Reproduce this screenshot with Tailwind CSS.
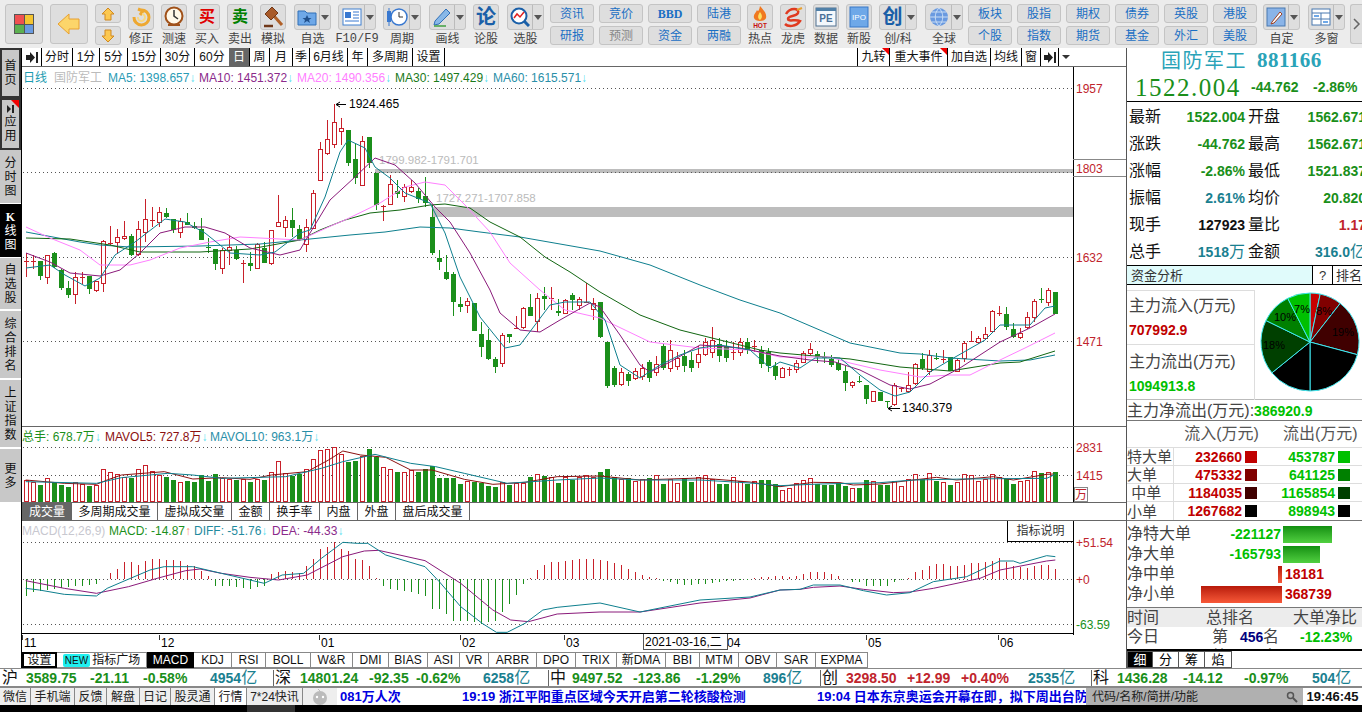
<!DOCTYPE html>
<html lang="zh">
<head>
  <meta charset="UTF-8">
  <title>国防军工 881166</title>
  <script src="https://cdn.jsdelivr.net/npm/@tailwindcss/browser@4"></script>
</head>
<body class="w-[1362px] h-[712px] overflow-hidden bg-white text-[12px] leading-none text-black font-['Liberation_Sans','Noto_Sans_CJK_SC',sans-serif]">

  <!-- toolbar -->
  <div class="flex h-[48px] bg-[#ececec] text-[#444] pt-[4px] pl-[5px]">
    <div class="w-[38px] h-[40px] rounded-[3px] border border-[#c4c4c4] bg-[#dedede] flex items-center justify-center">
      <svg width="22" height="22" viewBox="0 0 22 22"><rect x="1" y="1" width="20" height="20" fill="#555"/><rect x="2" y="2" width="9" height="9" fill="#f05050"/><rect x="12" y="2" width="8" height="9" fill="#f4c430"/><rect x="2" y="12" width="9" height="8" fill="#5cb050"/><rect x="12" y="12" width="8" height="8" fill="#6a9be0"/></svg>
    </div>
    <div class="w-[38px] h-[40px] ml-[7px] rounded-[3px] border border-[#c4c4c4] bg-[#dedede] flex items-center justify-center">
      <svg width="24" height="22" viewBox="0 0 24 22"><path d="M1 11 L12 1 V6 H22 V16 H12 V21 Z" fill="#fcd56a" stroke="#e8a030"/></svg>
    </div>
    <div class="w-[26px] ml-[7px] flex flex-col gap-[3px]">
      <div class="h-[19px] rounded-[3px] border border-[#c4c4c4] bg-[#dedede] flex items-center justify-center"><svg width="14" height="14" viewBox="0 0 14 14"><path d="M7 1 L13 7 H10 V13 H4 V7 H1 Z" fill="#fcc850" stroke="#d08820"/></svg></div>
      <div class="h-[19px] rounded-[3px] border border-[#c4c4c4] bg-[#dedede] flex items-center justify-center"><svg width="14" height="14" viewBox="0 0 14 14"><path d="M7 13 L13 7 H10 V1 H4 V7 H1 Z" fill="#fcc850" stroke="#d08820"/></svg></div>
    </div>

    <div class="w-[26px] ml-[7px] flex flex-col items-center gap-[3px]">
      <div class="w-[26px] h-[26px] rounded-[3px] border border-[#c4c4c4] bg-[#dedede] flex items-center justify-center"><svg width="20" height="20" viewBox="0 0 20 20"><path d="M10 3 A7.5 7.5 0 1 1 3 10 M7 2 L12 4 L9 8" fill="none" stroke="#eea830" stroke-width="3"/><path d="M7 10 A3.5 3.5 0 1 0 11 7" fill="none" stroke="#f8d880" stroke-width="2"/></svg></div>
      <span>修正</span>
    </div>
    <div class="w-[26px] ml-[7px] flex flex-col items-center gap-[3px]">
      <div class="w-[26px] h-[26px] rounded-[3px] border border-[#c4c4c4] bg-[#dedede] flex items-center justify-center"><svg width="20" height="22" viewBox="0 0 20 22"><circle cx="10" cy="10" r="8.5" fill="#fff8e8" stroke="#a05018" stroke-width="2"/><path d="M10 4 V10 L14 13" fill="none" stroke="#333" stroke-width="1.5"/><path d="M4 19 H16" stroke="#a05018" stroke-width="2"/></svg></div>
      <span>测速</span>
    </div>
    <div class="w-[26px] ml-[7px] flex flex-col items-center gap-[3px]">
      <div class="w-[26px] h-[26px] rounded-[3px] border border-[#c4c4c4] bg-[#dedede] flex items-center justify-center text-[#e00000] font-bold text-[16px]">买</div>
      <span>买入</span>
    </div>
    <div class="w-[26px] ml-[7px] flex flex-col items-center gap-[3px]">
      <div class="w-[26px] h-[26px] rounded-[3px] border border-[#c4c4c4] bg-[#dedede] flex items-center justify-center text-[#008000] font-bold text-[16px]">卖</div>
      <span>卖出</span>
    </div>
    <div class="w-[26px] ml-[7px] flex flex-col items-center gap-[3px]">
      <div class="w-[26px] h-[26px] rounded-[3px] border border-[#c4c4c4] bg-[#dedede] flex items-center justify-center"><svg width="22" height="22" viewBox="0 0 22 22"><path d="M12 10 L20 19" stroke="#b06028" stroke-width="3"/><path d="M3 8 L10 1 L16 7 L9 14 Z" fill="#a85a28" stroke="#703818"/><path d="M2 20 H11" stroke="#703818" stroke-width="2.5"/></svg></div>
      <span>模拟</span>
    </div>

    <div class="w-[37px] ml-[8px] flex flex-col items-center gap-[3px]">
      <div class="w-[37px] h-[26px] rounded-[3px] border border-[#c4c4c4] bg-[#dedede] flex items-center">
        <div class="w-[25px] flex justify-center border-r border-[#bbb] h-full items-center"><svg width="20" height="18" viewBox="0 0 20 18"><path d="M1 3 H8 L10 5 H19 V17 H1 Z" fill="#6ea8e8" stroke="#3070b8"/><path d="M10 7 L11.5 10 H14.5 L12 12 L13 15 L10 13 L7 15 L8 12 L5.5 10 H8.5 Z" fill="#20508c"/></svg></div>
        <div class="flex-1 flex justify-center"><div class="w-0 h-0 border-x-[4px] border-x-transparent border-t-[5px] border-t-[#555]"></div></div>
      </div>
      <span>自选</span>
    </div>
    <div class="w-[38px] ml-[7px] flex flex-col items-center gap-[3px]">
      <div class="w-[38px] h-[26px] rounded-[3px] border border-[#c4c4c4] bg-[#dedede] flex items-center">
        <div class="w-[26px] flex justify-center border-r border-[#bbb] h-full items-center"><svg width="20" height="18" viewBox="0 0 20 18"><rect x="1" y="1" width="18" height="16" fill="#fff" stroke="#4080d0"/><rect x="3" y="4" width="6" height="6" fill="#3878d0"/><path d="M11 4 H17 M11 7 H17 M11 10 H17 M3 13 H17" stroke="#3878d0"/></svg></div>
        <div class="flex-1 flex justify-center"><div class="w-0 h-0 border-x-[4px] border-x-transparent border-t-[5px] border-t-[#555]"></div></div>
      </div>
      <span class="font-['Liberation_Mono',monospace]">F10/F9</span>
    </div>
    <div class="w-[38px] ml-[7px] flex flex-col items-center gap-[3px]">
      <div class="w-[38px] h-[26px] rounded-[3px] border border-[#c4c4c4] bg-[#dedede] flex items-center">
        <div class="w-[26px] flex justify-center border-r border-[#bbb] h-full items-center"><svg width="22" height="20" viewBox="0 0 22 20"><rect x="1" y="4" width="4" height="11" fill="#3878d0"/><path d="M3 1 V19" stroke="#3878d0"/><circle cx="13" cy="10" r="8" fill="#fff" stroke="#3878d0" stroke-width="1.5"/><path d="M13 5 V10 H17" fill="none" stroke="#333"/></svg></div>
        <div class="flex-1 flex justify-center"><div class="w-0 h-0 border-x-[4px] border-x-transparent border-t-[5px] border-t-[#555]"></div></div>
      </div>
      <span>周期</span>
    </div>
    <div class="w-[37px] ml-[8px] flex flex-col items-center gap-[3px]">
      <div class="w-[37px] h-[26px] rounded-[3px] border border-[#c4c4c4] bg-[#dedede] flex items-center">
        <div class="w-[25px] flex justify-center border-r border-[#bbb] h-full items-center"><svg width="20" height="20" viewBox="0 0 20 20"><path d="M3 14 L14 2 L18 6 L7 17 L2 18 Z" fill="#88b8e8" stroke="#3070b8"/><path d="M2 19 H14" stroke="#40a040" stroke-width="1.5"/></svg></div>
        <div class="flex-1 flex justify-center"><div class="w-0 h-0 border-x-[4px] border-x-transparent border-t-[5px] border-t-[#555]"></div></div>
      </div>
      <span>画线</span>
    </div>
    <div class="w-[26px] ml-[7px] flex flex-col items-center gap-[3px]">
      <div class="w-[26px] h-[26px] rounded-[3px] border border-[#c4c4c4] bg-[#dedede] flex items-center justify-center text-[#1a5fa8] font-bold text-[20px]">论</div>
      <span>论股</span>
    </div>
    <div class="w-[37px] ml-[8px] flex flex-col items-center gap-[3px]">
      <div class="w-[37px] h-[26px] rounded-[3px] border border-[#c4c4c4] bg-[#dedede] flex items-center">
        <div class="w-[25px] flex justify-center border-r border-[#bbb] h-full items-center"><svg width="20" height="20" viewBox="0 0 20 20"><circle cx="9" cy="9" r="7.5" fill="#fff" stroke="#1a5fa8" stroke-width="2"/><path d="M14 14 L19 19" stroke="#1a5fa8" stroke-width="3"/><path d="M4 11 L7 7 L10 10 L14 5" fill="none" stroke="#e02020" stroke-width="1.5"/></svg></div>
        <div class="flex-1 flex justify-center"><div class="w-0 h-0 border-x-[4px] border-x-transparent border-t-[5px] border-t-[#555]"></div></div>
      </div>
      <span>选股</span>
    </div>

    <!-- text button pairs -->
    <div class="ml-[6px] flex gap-[5px] text-[#1a6fc4]">
      <div class="w-[44px] flex flex-col gap-[3px]">
        <div class="h-[19px] rounded-[3px] border border-[#c4c4c4] bg-[#dedede] flex items-center justify-center">资讯</div>
        <div class="h-[19px] rounded-[3px] border border-[#c4c4c4] bg-[#dedede] flex items-center justify-center">研报</div>
      </div>
      <div class="w-[44px] flex flex-col gap-[3px]">
        <div class="h-[19px] rounded-[3px] border border-[#c4c4c4] bg-[#dedede] flex items-center justify-center">竞价</div>
        <div class="h-[19px] rounded-[3px] border border-[#c4c4c4] bg-[#dedede] flex items-center justify-center text-[#888]">预测</div>
      </div>
      <div class="w-[44px] flex flex-col gap-[3px]">
        <div class="h-[19px] rounded-[3px] border border-[#c4c4c4] bg-[#dedede] flex items-center justify-center font-bold font-['Liberation_Serif',serif]">BBD</div>
        <div class="h-[19px] rounded-[3px] border border-[#c4c4c4] bg-[#dedede] flex items-center justify-center">资金</div>
      </div>
      <div class="w-[44px] flex flex-col gap-[3px]">
        <div class="h-[19px] rounded-[3px] border border-[#c4c4c4] bg-[#dedede] flex items-center justify-center">陆港</div>
        <div class="h-[19px] rounded-[3px] border border-[#c4c4c4] bg-[#dedede] flex items-center justify-center">两融</div>
      </div>
    </div>

    <div class="w-[26px] ml-[6px] flex flex-col items-center gap-[3px]">
      <div class="w-[26px] h-[26px] rounded-[3px] border border-[#c4c4c4] bg-[#dedede] flex items-center justify-center"><svg width="22" height="24" viewBox="0 0 22 24"><path d="M11 1 C15 6 18 8 17 13 C16 17 6 17 5 13 C4 9 7 8 8 5 C9 7 10 6 11 1 Z" fill="#f07820"/><path d="M11 7 C13 10 14 12 11 15 C8 13 9 10 11 7 Z" fill="#fce060"/><text x="11" y="22.5" text-anchor="middle" font-size="6.5" font-weight="700" fill="#c81010">HOT</text></svg></div>
      <span>热点</span>
    </div>
    <div class="w-[26px] ml-[7px] flex flex-col items-center gap-[3px]">
      <div class="w-[26px] h-[26px] rounded-[3px] border border-[#c4c4c4] bg-[#dedede] flex items-center justify-center"><svg width="22" height="22" viewBox="0 0 22 22"><path d="M4 8 C8 1 18 2 16 7 C14 11 6 9 6 13 C6 16 14 13 18 15 C14 21 6 21 3 18" fill="none" stroke="#e03a20" stroke-width="2.5"/><path d="M15 4 L20 2" stroke="#e8a030" stroke-width="2"/></svg></div>
      <span>龙虎</span>
    </div>
    <div class="w-[26px] ml-[7px] flex flex-col items-center gap-[3px]">
      <div class="w-[26px] h-[26px] rounded-[3px] border border-[#c4c4c4] bg-[#dedede] flex items-center justify-center"><svg width="22" height="20" viewBox="0 0 22 20"><rect x="1" y="1" width="20" height="18" fill="#f4f8fc" stroke="#507090"/><rect x="1" y="1" width="20" height="3" fill="#5080a8"/><text x="11" y="15" text-anchor="middle" font-size="10" font-weight="700" fill="#4a7098">PE</text></svg></div>
      <span>数据</span>
    </div>
    <div class="w-[26px] ml-[7px] flex flex-col items-center gap-[3px]">
      <div class="w-[26px] h-[26px] rounded-[3px] border border-[#c4c4c4] bg-[#dedede] flex items-center justify-center"><svg width="20" height="22" viewBox="0 0 20 22"><rect x="1" y="1" width="18" height="20" fill="#6ea8e8" stroke="#3878c8"/><text x="10" y="14" text-anchor="middle" font-size="8" fill="#fff">IPO</text></svg></div>
      <span>新股</span>
    </div>
    <div class="w-[38px] ml-[7px] flex flex-col items-center gap-[3px]">
      <div class="w-[38px] h-[26px] rounded-[3px] border border-[#c4c4c4] bg-[#dedede] flex items-center">
        <div class="w-[26px] flex justify-center border-r border-[#bbb] h-full items-center text-[#1a5fa8] font-bold text-[20px]">创</div>
        <div class="flex-1 flex justify-center"><div class="w-0 h-0 border-x-[4px] border-x-transparent border-t-[5px] border-t-[#555]"></div></div>
      </div>
      <span>创/科</span>
    </div>
    <div class="w-[38px] ml-[8px] flex flex-col items-center gap-[3px]">
      <div class="w-[38px] h-[26px] rounded-[3px] border border-[#c4c4c4] bg-[#dedede] flex items-center">
        <div class="w-[26px] flex justify-center border-r border-[#bbb] h-full items-center"><svg width="20" height="20" viewBox="0 0 20 20"><circle cx="10" cy="10" r="9" fill="#6a9ae0"/><path d="M1 10 H19 M10 1 C5 6 5 14 10 19 C15 14 15 6 10 1 M3 5 H17 M3 15 H17" fill="none" stroke="#c8dcf4"/></svg></div>
        <div class="flex-1 flex justify-center"><div class="w-0 h-0 border-x-[4px] border-x-transparent border-t-[5px] border-t-[#555]"></div></div>
      </div>
      <span>全球</span>
    </div>

    <div class="ml-[5px] flex gap-[5px] text-[#1a6fc4]">
      <div class="w-[44px] flex flex-col gap-[3px]">
        <div class="h-[19px] rounded-[3px] border border-[#c4c4c4] bg-[#dedede] flex items-center justify-center">板块</div>
        <div class="h-[19px] rounded-[3px] border border-[#c4c4c4] bg-[#dedede] flex items-center justify-center">个股</div>
      </div>
      <div class="w-[44px] flex flex-col gap-[3px]">
        <div class="h-[19px] rounded-[3px] border border-[#c4c4c4] bg-[#dedede] flex items-center justify-center">股指</div>
        <div class="h-[19px] rounded-[3px] border border-[#c4c4c4] bg-[#dedede] flex items-center justify-center">指数</div>
      </div>
      <div class="w-[44px] flex flex-col gap-[3px]">
        <div class="h-[19px] rounded-[3px] border border-[#c4c4c4] bg-[#dedede] flex items-center justify-center">期权</div>
        <div class="h-[19px] rounded-[3px] border border-[#c4c4c4] bg-[#dedede] flex items-center justify-center">期货</div>
      </div>
      <div class="w-[44px] flex flex-col gap-[3px]">
        <div class="h-[19px] rounded-[3px] border border-[#c4c4c4] bg-[#dedede] flex items-center justify-center">债券</div>
        <div class="h-[19px] rounded-[3px] border border-[#c4c4c4] bg-[#dedede] flex items-center justify-center">基金</div>
      </div>
      <div class="w-[44px] flex flex-col gap-[3px]">
        <div class="h-[19px] rounded-[3px] border border-[#c4c4c4] bg-[#dedede] flex items-center justify-center">英股</div>
        <div class="h-[19px] rounded-[3px] border border-[#c4c4c4] bg-[#dedede] flex items-center justify-center">外汇</div>
      </div>
      <div class="w-[44px] flex flex-col gap-[3px]">
        <div class="h-[19px] rounded-[3px] border border-[#c4c4c4] bg-[#dedede] flex items-center justify-center">港股</div>
        <div class="h-[19px] rounded-[3px] border border-[#c4c4c4] bg-[#dedede] flex items-center justify-center">美股</div>
      </div>
    </div>

    <div class="w-[37px] ml-[6px] flex flex-col items-center gap-[3px]">
      <div class="w-[37px] h-[26px] rounded-[3px] border border-[#c4c4c4] bg-[#dedede] flex items-center">
        <div class="w-[25px] flex justify-center border-r border-[#bbb] h-full items-center"><svg width="20" height="20" viewBox="0 0 20 20"><rect x="1" y="1" width="18" height="18" fill="#8ab4e8" stroke="#4878b0"/><path d="M6 15 L14 5 L16 7 L8 16 L5 17 Z" fill="#fff" stroke="#a04020"/></svg></div>
        <div class="flex-1 flex justify-center"><div class="w-0 h-0 border-x-[4px] border-x-transparent border-t-[5px] border-t-[#555]"></div></div>
      </div>
      <span>自定</span>
    </div>
    <div class="w-[37px] ml-[8px] flex flex-col items-center gap-[3px]">
      <div class="w-[37px] h-[26px] rounded-[3px] border border-[#c4c4c4] bg-[#dedede] flex items-center">
        <div class="w-[25px] flex justify-center border-r border-[#bbb] h-full items-center"><svg width="20" height="18" viewBox="0 0 20 18"><rect x="1" y="1" width="18" height="16" fill="#fff" stroke="#4878b0"/><path d="M1 5 H19 M1 11 H19 M10 5 V17" stroke="#4878b0"/><rect x="3" y="7" width="5" height="2" fill="#6ea8e8"/><rect x="12" y="13" width="5" height="2" fill="#6ea8e8"/></svg></div>
        <div class="flex-1 flex justify-center"><div class="w-0 h-0 border-x-[4px] border-x-transparent border-t-[5px] border-t-[#555]"></div></div>
      </div>
      <span>多窗</span>
    </div>
    <div class="w-[12px] h-[40px] ml-[5px] rounded-l-[3px] border border-r-0 border-[#c4c4c4] bg-[#dedede] flex items-center justify-center">
      <svg width="8" height="12" viewBox="0 0 8 12"><path d="M1 1 L6 6 L1 11" fill="none" stroke="#666" stroke-width="1.5"/></svg>
    </div>
  </div>

  <div class="flex h-[620px]">
    <!-- left tabs -->
    <div class="w-[21px] flex flex-col text-[12px] leading-[14px] text-center text-[#111]">
      <div class="h-[50px] bg-[#c8c8c8] border-2 border-[#333] flex items-center justify-center"><span class="w-[12px]">首页</span></div>
      <div class="relative h-[52px] bg-[#c8c8c8] border-2 border-[#333] flex flex-col items-center justify-center gap-[2px]">
        <svg width="8" height="8" viewBox="0 0 8 8"><path d="M0 0 L4 4 L0 8 Z M5 0 H7 V8 H5 Z" fill="#222"/></svg>
        <span class="w-[12px]">应用</span>
        <div class="absolute top-0 right-0 w-0 h-0 border-l-[8px] border-l-transparent border-t-[8px] border-t-[#f00000]"></div>
      </div>
      <div class="h-[54px] bg-[#c8c8c8] border-b border-white flex items-center justify-center"><span class="w-[12px]">分时图</span></div>
      <div class="h-[54px] bg-black text-white border-b border-white flex items-center justify-center"><span class="w-[12px]"><b class="font-['Liberation_Serif',serif]">K</b>线图</span></div>
      <div class="h-[53px] bg-[#c8c8c8] border-b-2 border-white flex items-center justify-center"><span class="w-[12px]">自选股</span></div>
      <div class="h-[69px] bg-[#c8c8c8] border-b-2 border-white flex items-center justify-center"><span class="w-[12px]">综合排名</span></div>
      <div class="h-[69px] bg-[#c8c8c8] border-b-2 border-white flex items-center justify-center"><span class="w-[12px]">上证指数</span></div>
      <div class="h-[53px] bg-[#c8c8c8] flex items-center justify-center"><span class="w-[12px]">更多</span></div>
    </div>

    <!-- chart column -->
    <div class="w-[1105px] flex flex-col border-l border-black">
      <div class="flex h-[19px] border-b border-[#666] text-[#111]">
        <div class="w-[19px] flex items-center justify-center"><svg width="12" height="11" viewBox="0 0 12 11"><path d="M0 3 H4 V0 L9 5.5 L4 11 V8 H0 Z M10 0 H12 V11 H10 Z" fill="#222"/></svg></div>
        <div class="w-[31px] border-l border-black flex items-center justify-center">分时</div>
        <div class="w-[27px] border-l border-black flex items-center justify-center">1分</div>
        <div class="w-[28px] border-l border-black flex items-center justify-center">5分</div>
        <div class="w-[33px] border-l border-black flex items-center justify-center">15分</div>
        <div class="w-[34px] border-l border-black flex items-center justify-center">30分</div>
        <div class="w-[35px] border-l border-black flex items-center justify-center">60分</div>
        <div class="w-[20px] bg-[#666] text-white flex items-center justify-center">日</div>
        <div class="w-[20px] border-l border-black flex items-center justify-center">周</div>
        <div class="w-[23px] border-l border-black flex items-center justify-center">月</div>
        <div class="w-[17px] border-l border-black flex items-center justify-center">季</div>
        <div class="w-[38px] border-l border-black flex items-center justify-center">6月线</div>
        <div class="w-[20px] border-l border-black flex items-center justify-center">年</div>
        <div class="w-[45px] border-l border-black flex items-center justify-center">多周期</div>
        <div class="w-[33px] border-x border-black flex items-center justify-center">设置</div>
        <div class="w-[412px]"></div>
        <div class="relative w-[32px] border-l border-black flex items-center justify-center">九转<div class="absolute top-0 right-0 w-0 h-0 border-l-[7px] border-l-transparent border-t-[7px] border-t-[#f00000]"></div></div>
        <div class="relative w-[58px] border-l border-black flex items-center justify-center">重大事件<div class="absolute top-0 right-0 w-0 h-0 border-l-[7px] border-l-transparent border-t-[7px] border-t-[#f00000]"></div></div>
        <div class="w-[43px] border-l border-black flex items-center justify-center">加自选</div>
        <div class="w-[31px] border-l border-black flex items-center justify-center">均线</div>
        <div class="w-[19px] border-l border-black flex items-center justify-center">窗</div>
        <div class="w-[18px] border-l border-black flex items-center justify-center"><svg width="12" height="11" viewBox="0 0 12 11"><path d="M0 3 H4 V0 L9 5.5 L4 11 V8 H0 Z M10 0 H12 V11 H10 Z" fill="#222"/></svg></div>
        <div class="w-[15px] border-l border-black flex items-center justify-center"><div class="w-0 h-0 border-x-[4px] border-x-transparent border-t-[4px] border-t-[#333]"></div></div>
      </div>

      <!-- price panel -->
      <div class="relative h-[359px]">
        <svg id="priceChart" class="block w-[1104px] h-[359px]" viewBox="22 67 1104 359"></svg>
        <div class="absolute top-[5px] left-[1px] flex text-[12px] whitespace-nowrap">
          <span class="text-[#1b9bb0]">日线</span>
          <span class="ml-[7px] text-[#bbb]">国防军工</span>
          <span class="ml-[6px] text-[#2a9bb5] w-[91px]">MA5: 1398.657<i class="not-italic text-[#55e0f0]">↓</i></span>
          <span class="text-[#8b2a8b] w-[98px]">MA10: 1451.372<i class="not-italic text-[#55e0f0]">↓</i></span>
          <span class="text-[#ff80ff] w-[98px]">MA20: 1490.356<i class="not-italic text-[#55e0f0]">↓</i></span>
          <span class="text-[#1a7a1a] w-[98px]">MA30: 1497.429<i class="not-italic text-[#55e0f0]">↓</i></span>
          <span class="text-[#2a8fa8]">MA60: 1615.571<i class="not-italic text-[#55e0f0]">↓</i></span>
        </div>
      </div>

      <!-- volume panel -->
      <div class="relative h-[76px] border-t border-[#666]">
        <svg id="volChart" class="block w-[1104px] h-[75px]" viewBox="22 427 1104 75"></svg>
        <div class="absolute top-[4px] left-[0px] flex text-[12px] whitespace-nowrap">
          <span class="text-[#1b8f1b] w-[83px]">总手: 678.7万<i class="not-italic text-[#55e0f0]">↓</i></span>
          <span class="text-[#8b1010] w-[105px]">MAVOL5: 727.8万<i class="not-italic text-[#55e0f0]">↓</i></span>
          <span class="text-[#2a8fa8]">MAVOL10: 963.1万<i class="not-italic text-[#55e0f0]">↓</i></span>
        </div>
      </div>

      <!-- volume tabs -->
      <div class="flex h-[19px] border-b border-t border-[#666] text-[#111] pr-[656px]">
        <div class="w-[50px] bg-[#666] text-white flex items-center justify-center">成交量</div>
        <div class="w-[86px] border-r border-[#666] flex items-center justify-center">多周期成交量</div>
        <div class="w-[74px] border-r border-[#666] flex items-center justify-center">虚拟成交量</div>
        <div class="w-[38px] border-r border-[#666] flex items-center justify-center">金额</div>
        <div class="w-[50px] border-r border-[#666] flex items-center justify-center">换手率</div>
        <div class="w-[38px] border-r border-[#666] flex items-center justify-center">内盘</div>
        <div class="w-[38px] border-r border-[#666] flex items-center justify-center">外盘</div>
        <div class="w-[74px] border-r border-[#666] flex items-center justify-center">盘后成交量</div>
      </div>

      <!-- macd panel -->
      <div class="relative h-[114px]">
        <svg id="macdChart" class="block w-[1104px] h-[114px]" viewBox="22 521 1104 114"></svg>
        <div class="absolute top-[4px] left-[0px] flex text-[12px] whitespace-nowrap">
          <span class="text-[#c8c8d0] w-[87px]">MACD(12,26,9)</span>
          <span class="text-[#1b8f1b] w-[85px]">MACD: -14.87<i class="not-italic text-[#ff9070]">↑</i></span>
          <span class="text-[#1f8a9e] w-[78px]">DIFF: -51.76<i class="not-italic text-[#55e0f0]">↓</i></span>
          <span class="text-[#8b2a8b]">DEA: -44.33<i class="not-italic text-[#55e0f0]">↓</i></span>
        </div>
        <div class="absolute top-0 left-[985px] w-[67px] h-[21px] border-l border-b border-r border-black bg-white flex items-center justify-center text-[#333]">指标说明</div>
      </div>

      <!-- x axis -->
      <div class="relative h-[17px]">
        <svg id="axisChart" class="block w-[1104px] h-[17px]" viewBox="22 635 1104 17"></svg>
        <div class="absolute top-[-1px] left-[621px] w-[85px] h-[16px] border-l border-r border-b border-[#555] bg-white flex items-center pl-[1px]">2021-03-16,二</div>
      </div>

      <!-- indicators -->
      <div class="flex h-[16px] text-[#111]">
        <div class="w-[35px] border-2 border-black flex items-center justify-center">设置</div>
        <div class="w-[90px] border-y border-r border-[#888] flex items-center justify-center gap-[2px]"><span class="bg-[#20f0f0] text-[#111] rounded-[2px] px-[2px] text-[10px] leading-[13px]">NEW</span>指标广场</div>
        <div class="w-[47px] bg-black text-white flex items-center justify-center">MACD</div>
        <div class="w-[38px] border-y border-r border-[#888] flex items-center justify-center">KDJ</div>
        <div class="w-[34px] border-y border-r border-[#888] flex items-center justify-center">RSI</div>
        <div class="w-[45px] border-y border-r border-[#888] flex items-center justify-center">BOLL</div>
        <div class="w-[42px] border-y border-r border-[#888] flex items-center justify-center">W&amp;R</div>
        <div class="w-[36px] border-y border-r border-[#888] flex items-center justify-center">DMI</div>
        <div class="w-[39px] border-y border-r border-[#888] flex items-center justify-center">BIAS</div>
        <div class="w-[32px] border-y border-r border-[#888] flex items-center justify-center">ASI</div>
        <div class="w-[29px] border-y border-r border-[#888] flex items-center justify-center">VR</div>
        <div class="w-[48px] border-y border-r border-[#888] flex items-center justify-center">ARBR</div>
        <div class="w-[39px] border-y border-r border-[#888] flex items-center justify-center">DPO</div>
        <div class="w-[41px] border-y border-r border-[#888] flex items-center justify-center">TRIX</div>
        <div class="w-[49px] border-y border-r border-[#888] flex items-center justify-center">新DMA</div>
        <div class="w-[34px] border-y border-r border-[#888] flex items-center justify-center">BBI</div>
        <div class="w-[39px] border-y border-r border-[#888] flex items-center justify-center">MTM</div>
        <div class="w-[38px] border-y border-r border-[#888] flex items-center justify-center">OBV</div>
        <div class="w-[39px] border-y border-r border-[#888] flex items-center justify-center">SAR</div>
        <div class="w-[52px] border-y border-r border-[#888] flex items-center justify-center">EXPMA</div>
      </div>
    </div>

    <!-- right panel -->
    <div class="w-[236px] border-l border-[#555] flex flex-col overflow-hidden">
      <div class="h-[54px] shrink-0 border-b border-black flex flex-col">
        <div class="h-[26px] flex items-center pl-[34px] gap-[10px] text-[#2aa3b8]">
          <span class="text-[20px] tracking-[1.5px]">国防军工</span>
          <span class="text-[21px] font-bold font-['Liberation_Serif',serif] tracking-[0.5px]">881166</span>
        </div>
        <div class="h-[28px] flex items-center pl-[8px]">
          <span class="w-[116px] text-[25px] text-[#1a8f1a] font-['Liberation_Serif',serif] tracking-[1.5px]">1522.004</span>
          <span class="w-[62px] text-[14px] font-bold text-[#1a8f1a]">-44.762</span>
          <span class="text-[14px] font-bold text-[#1a8f1a]">-2.86%</span>
        </div>
      </div>

      <div class="h-[164px] shrink-0 pt-[2px] grid grid-cols-[118px_121px] grid-rows-6 border-b border-black text-[16px] text-[#111] whitespace-nowrap">
        <div class="flex items-center justify-between pl-[2px]">最新<b class="text-[14px] text-[#1a8f1a]">1522.004</b></div>
        <div class="flex items-center justify-between pl-[3px]">开盘<b class="text-[14px] text-[#1a8f1a]">1562.671</b></div>
        <div class="flex items-center justify-between pl-[2px]">涨跌<b class="text-[14px] text-[#1a8f1a]">-44.762</b></div>
        <div class="flex items-center justify-between pl-[3px]">最高<b class="text-[14px] text-[#1a8f1a]">1562.671</b></div>
        <div class="flex items-center justify-between pl-[2px]">涨幅<b class="text-[14px] text-[#1a8f1a]">-2.86%</b></div>
        <div class="flex items-center justify-between pl-[3px]">最低<b class="text-[14px] text-[#1a8f1a]">1521.837</b></div>
        <div class="flex items-center justify-between pl-[2px]">振幅<b class="text-[14px] text-[#1a8090]">2.61%</b></div>
        <div class="flex items-center justify-between pl-[3px]">均价<b class="text-[14px] text-[#1a8f1a]">20.820</b></div>
        <div class="flex items-center justify-between pl-[2px]">现手<b class="text-[14px] text-[#111]">127923</b></div>
        <div class="flex items-center justify-between pl-[3px]">量比<b class="text-[14px] text-[#c0242c]">1.17</b></div>
        <div class="flex items-center justify-between pl-[2px]">总手<b class="text-[14px] text-[#1a8090]">1518<span class="font-normal text-[16px]">万</span></b></div>
        <div class="flex items-center justify-between pl-[3px]">金额<b class="text-[14px] text-[#1a8090]">316.0<span class="font-normal text-[16px]">亿</span></b></div>
      </div>

      <div class="h-[19px] shrink-0 flex bg-[#e0fbfb] border-b border-black text-[13px] text-[#333]">
        <div class="w-[187px] flex items-center pl-[4px]">资金分析</div>
        <div class="w-[20px] border-l border-black bg-white flex items-center justify-center">?</div>
        <div class="flex-1 border-l border-black bg-white flex items-center pl-[3px] whitespace-nowrap">排名</div>
      </div>

      <div class="h-[115px] shrink-0 flex relative text-[#444]">
        <div class="w-[128px] pt-[5px]">
          <div class="h-[55px] border-t border-r border-b border-[#ddd] pl-[2px] pt-[7px] text-[16px]">主力流入(万元)<div class="mt-[9px] text-[14px] font-bold text-[#c00000]">707992.9</div></div>
          <div class="h-[55px] border-r border-[#ddd] pl-[2px] pt-[9px] text-[16px]">主力流出(万元)<div class="mt-[9px] text-[14px] font-bold text-[#00c000]">1094913.8</div></div>
        </div>
        <svg id="pieChart" class="absolute left-[132px] top-[6px]" width="102" height="102" viewBox="-51 -51 102 102"></svg>
      </div>

      <div class="h-[22px] shrink-0 -mt-[1px] pt-[1px] flex items-center text-[16px] text-[#444] border-t border-b border-[#bbb] border-b-[#777]">主力净流出(万元):<b class="text-[14px] text-[#00c000]">386920.9</b></div>

      <div class="h-[27px] shrink-0 flex items-center text-[16px] text-[#555] border-b border-[#ddd]">
        <span class="w-[142px] pl-[47px] text-center whitespace-nowrap">流入(万元)</span>
        <span class="ml-[14px] whitespace-nowrap">流出(万元)</span>
      </div>
      <div class="h-[18px] shrink-0 flex items-center border-b border-[#ddd]">
        <span class="w-[47px] text-[15px] text-[#444] border-r border-[#ddd] h-full flex items-center whitespace-nowrap">特大单</span>
        <span class="w-[71px] text-right text-[14px] font-bold text-[#c00000] pr-[3px]">232660</span>
        <span class="w-[12px] h-[12px] bg-[#c00000]"></span>
        <span class="w-[81px] text-right text-[14px] font-bold text-[#00c000] pr-[3px]">453787</span>
        <span class="w-[12px] h-[12px] bg-[#00c000]"></span>
      </div>
      <div class="h-[18px] shrink-0 flex items-center border-b border-[#ddd]">
        <span class="w-[47px] text-[15px] text-[#444] border-r border-[#ddd] h-full flex items-center whitespace-nowrap">大单</span>
        <span class="w-[71px] text-right text-[14px] font-bold text-[#c00000] pr-[3px]">475332</span>
        <span class="w-[12px] h-[12px] bg-[#800000]"></span>
        <span class="w-[81px] text-right text-[14px] font-bold text-[#00c000] pr-[3px]">641125</span>
        <span class="w-[12px] h-[12px] bg-[#008000]"></span>
      </div>
      <div class="h-[18px] shrink-0 flex items-center border-b border-[#ddd]">
        <span class="w-[47px] text-[15px] text-[#444] border-r border-[#ddd] h-full flex items-center whitespace-nowrap">&nbsp;中单</span>
        <span class="w-[71px] text-right text-[14px] font-bold text-[#c00000] pr-[3px]">1184035</span>
        <span class="w-[12px] h-[12px] bg-[#400000]"></span>
        <span class="w-[81px] text-right text-[14px] font-bold text-[#00c000] pr-[3px]">1165854</span>
        <span class="w-[12px] h-[12px] bg-[#004000]"></span>
      </div>
      <div class="h-[19px] shrink-0 flex items-center border-b border-[#777]">
        <span class="w-[47px] text-[15px] text-[#444] border-r border-[#ddd] h-full flex items-center whitespace-nowrap">小单</span>
        <span class="w-[71px] text-right text-[14px] font-bold text-[#c00000] pr-[3px]">1267682</span>
        <span class="w-[12px] h-[12px] bg-black"></span>
        <span class="w-[81px] text-right text-[14px] font-bold text-[#00c000] pr-[3px]">898943</span>
        <span class="w-[12px] h-[12px] bg-black"></span>
      </div>

      <div class="h-[87px] shrink-0 pt-[3px] flex flex-col border-b border-[#777]">
        <div class="h-[20px] flex items-center text-[16px] text-[#444]"><span class="w-[100px] whitespace-nowrap">净特大单</span><b class="w-[54px] text-right text-[14px] text-[#00c000]">-221127</b><span class="ml-[2px] w-[49px] h-[17px] bg-gradient-to-b from-[#109010] to-[#50d040]"></span></div>
        <div class="h-[20px] flex items-center text-[16px] text-[#444]"><span class="w-[100px] whitespace-nowrap">净大单</span><b class="w-[54px] text-right text-[14px] text-[#00c000]">-165793</b><span class="ml-[2px] w-[37px] h-[17px] bg-gradient-to-b from-[#109010] to-[#50d040]"></span></div>
        <div class="h-[20px] flex items-center text-[16px] text-[#444]"><span class="w-[151px] whitespace-nowrap">净中单</span><span class="w-[4px] h-[17px] bg-gradient-to-b from-[#b81808] to-[#f85838]"></span><b class="ml-[3px] text-[14px] text-[#c00000]">18181</b></div>
        <div class="h-[20px] flex items-center text-[16px] text-[#444]"><span class="w-[74px] whitespace-nowrap">净小单</span><span class="w-[81px] h-[17px] bg-gradient-to-b from-[#b81808] to-[#f85838]"></span><b class="ml-[3px] text-[14px] text-[#c00000]">368739</b></div>
      </div>

      <div class="h-[19px] shrink-0 bg-[#ececec] flex items-center text-[16px] text-[#444]">
        <span class="w-[79px]">时间</span><span class="w-[87px]">总排名</span><span class="whitespace-nowrap">大单净比</span>
      </div>
      <div class="h-[24px] shrink-0 overflow-hidden border-b-2 border-black text-[16px] text-[#444]">
        <div class="h-[20px] flex items-center"><span class="w-[85px]">今日</span><span class="w-[28px]">第</span><b class="w-[23px] text-right text-[14px] text-[#000080]">456</b><span class="w-[37px]">名</span><b class="text-[14px] text-[#00c000]">-12.23%</b></div>
        <div class="h-[20px] flex items-center"><span class="w-[85px]">3日</span><span class="w-[28px]">第</span><b class="w-[23px] text-right text-[14px] text-[#000080]">488</b><span class="w-[37px]">名</span><b class="text-[14px] text-[#00c000]">-5.04%</b></div>
      </div>

      <div class="h-[17px] shrink-0 flex text-[13px]">
        <div class="w-[26px] bg-black text-white border border-[#555] flex items-center justify-center">细</div>
        <div class="w-[26px] border-y border-r border-[#555] flex items-center justify-center">分</div>
        <div class="w-[26px] border-y border-r border-[#555] flex items-center justify-center">筹</div>
        <div class="w-[27px] border-y border-r border-[#555] flex items-center justify-center">焰</div>
      </div>
    </div>
  </div>

  <!-- index quotes -->
  <div class="flex h-[18px] border-t border-[#888] items-center text-[14px] font-bold text-[#1a8f1a] whitespace-nowrap">
    <div class="w-[273px] flex items-center">
      <span class="w-[26px] pl-[2px] text-[16px] font-normal text-[#111]">沪</span><span class="w-[64px]">3589.75</span><span class="w-[53px]">-21.11</span><span class="w-[67px]">-0.58%</span><span class="text-[#1a8090]">4954<span class="font-normal text-[16px]">亿</span></span>
    </div>
    <div class="w-[275px] flex items-center border-l border-[#666]">
      <span class="w-[26px] pl-[1px] text-[16px] font-normal text-[#111]">深</span><span class="w-[69px]">14801.24</span><span class="w-[47px]">-92.35</span><span class="w-[67px]">-0.62%</span><span class="text-[#1a8090]">6258<span class="font-normal text-[16px]">亿</span></span>
    </div>
    <div class="w-[272px] flex items-center border-l border-[#666]">
      <span class="w-[23px] pl-[1px] text-[16px] font-normal text-[#111]">中</span><span class="w-[61px]">9497.52</span><span class="w-[63px]">-123.86</span><span class="w-[67px]">-1.29%</span><span class="text-[#1a8090]">896<span class="font-normal text-[16px]">亿</span></span>
    </div>
    <div class="w-[271px] flex items-center border-l border-[#666] text-[#c0242c]">
      <span class="w-[25px] pl-[1px] text-[16px] font-normal text-[#111]">创</span><span class="w-[61px]">3298.50</span><span class="w-[54px]">+12.99</span><span class="w-[67px]">+0.40%</span><span class="text-[#1a8090]">2535<span class="font-normal text-[16px]">亿</span></span>
    </div>
    <div class="w-[271px] flex items-center border-l border-[#666]">
      <span class="w-[25px] pl-[1px] text-[16px] font-normal text-[#111]">科</span><span class="w-[66px]">1436.28</span><span class="w-[61px]">-14.12</span><span class="w-[68px]">-0.97%</span><span class="text-[#1a8090]">504<span class="font-normal text-[16px]">亿</span></span>
    </div>
  </div>

  <!-- status bar -->
  <div class="flex h-[19px] border-t-2 border-[#888] text-[12px] text-[#222]">
    <div class="w-[31px] bg-[#eee] border-r border-[#888] flex items-center justify-center">微信</div>
    <div class="w-[44px] bg-[#eee] border-r border-[#888] flex items-center justify-center">手机端</div>
    <div class="w-[32px] bg-[#eee] border-r border-[#888] flex items-center justify-center">反馈</div>
    <div class="w-[33px] bg-[#eee] border-r border-[#888] flex items-center justify-center">解盘</div>
    <div class="w-[31px] bg-[#eee] border-r border-[#888] flex items-center justify-center">日记</div>
    <div class="w-[44px] bg-[#eee] border-r border-[#888] flex items-center justify-center">股灵通</div>
    <div class="w-[32px] border-r border-[#888] flex items-center justify-center">行情</div>
    <div class="w-[56px] bg-[#eee] border-r border-[#888] flex items-center justify-center">7*24快讯</div>
    <div class="w-[34px] bg-[#eee] flex items-center justify-center"><svg width="18" height="16" viewBox="0 0 18 16"><circle cx="9" cy="9" r="7" fill="#bbb"/><circle cx="6" cy="8" r="1.2" fill="#fff"/><circle cx="12" cy="8" r="1.2" fill="#fff"/><path d="M9 2 L7 0" stroke="#bbb"/></svg></div>
    <div class="w-[749px] overflow-hidden whitespace-nowrap flex items-center text-[13px] font-bold text-[#0000e0]">
      <span class="w-[125px] shrink-0 pl-[3px]">081万人次</span><span class="w-[355px] shrink-0">19:19 浙江平阳重点区域今天开启第二轮核酸检测</span><span class="shrink-0">19:04 日本东京奥运会开幕在即，拟下周出台防疫措施</span>
    </div>
    <div class="w-[217px] bg-[#b0b0b0] flex items-center justify-between pl-[6px] pr-[5px] text-[#222]">代码/名称/简拼/功能
      <svg width="12" height="12" viewBox="0 0 12 12"><circle cx="4.5" cy="4.5" r="3" fill="none" stroke="#555" stroke-width="1.5"/><path d="M7 7 L11 11" stroke="#555" stroke-width="2"/></svg>
    </div>
    <div class="flex-1 flex items-center justify-center font-bold text-[13px] text-[#111]">19:46:45</div>
  </div>

  <div class="h-[7px] bg-black pl-[247px]"><div class="w-[48px] h-full bg-[#333]"></div></div>

  <script>
    const RED = '#c8202a', GREEN = '#1b8f1b', TEAL = '#0e7f8e', PURPLE = '#8a1a7a', PINK = '#ff80ff', DKGREEN = '#116611';
    const barX = i => Math.round(26 + 7 * i);

    // [type, body top, body bottom, high, low], read off the picture at 3x (base + v / 3)
    const candleBlocks = [
      { base: 45, k: 3, rows: [
        ['r',648,648,625,695],['r',648,648,630,672],['g',648,692,648,705],['r',631,695,631,716],['g',624,666,620,668],
        ['g',675,730,672,735],['g',730,750,708,760],['r',695,748,682,776],['r',695,695,682,718],['g',693,732,693,748],
        ['r',708,735,708,740],['r',588,715,585,740],['r',593,593,543,600],['r',577,590,552,628],['r',572,580,528,585],
        ['g',573,629,568,632],['r',553,628,528,632],['r',522,560,462,592],['r',526,526,487,547],['r',502,530,487,545],
        ['g',504,515,488,520],['g',522,556,522,563],['r',528,560,518,578],['g',530,540,505,540],['g',543,549,530,552],
        ['g',552,585,519,585],['g',605,605,580,625],['g',613,656,613,676],['r',615,668,610,687],['r',605,616,572,660],
        ['g',615,642,603,645],['r',653,653,645,713],['g',654,662,620,677],['r',598,670,595,672],['g',610,653,592,655],
        ['r',556,653,556,660],['r',531,544,450,546],['r',526,547,514,575],['g',525,548,489,575],['g',552,585,540,587]
      ] },
      { base: 90, k: 3, rows: [
        ['r',412,463,388,485],['r',310,415,300,417],['r',176,271,155,272],['r',148,188,90,195],['r',97,163,43,173],
        ['r',115,122,84,165],['g',120,218,120,228],['g',207,265,162,282],['r',154,284,138,284],['g',141,218,141,235],
        ['g',250,345,250,360],['r',348,348,345,392],['r',283,341,255,341],['g',303,311,270,325],['r',292,318,282,335],
        ['r',292,302,270,310],['g',303,327,295,340],['g',318,340,262,350],['g',381,488,345,495],['g',504,515,480,540],
        ['g',546,567,495,570],['g',552,635,545,678],['g',642,650,620,665],['r',634,646,625,668],['g',640,722,640,722],
        ['g',732,770,697,800],['g',750,807,718,810],['g',808,830,800,848],['r',736,820,728,830],['g',732,740,732,760],
        ['r',714,714,678,717],['r',655,710,650,718],['g',652,677,612,678],['r',625,692,610,727],['g',619,628,590,660],
        ['r',625,625,590,660],['g',663,670,628,678],['r',629,668,627,672],['g',616,630,608,660],['r',626,646,622,660],
        ['r',635,635,580,640],['r',640,658,625,690],['g',636,742,636,744]
      ] },
      { base: 0, k: 1, rows: [
        ['g',342,386,342,388],['g',368,385,366,387],['r',372,384,368,386],['g',374,381,372,386],['r',371,378,368,380],
        ['r',368,376,364,380],['g',362,378,360,382],['r',364,372,356,376],['g',346,368,344,370],['r',350,368,340,372],
        ['r',358,366,352,370],['g',356,366,350,372],['g',360,368,352,372],['r',354,362,346,368],['r',342,354,338,356],
        ['r',340,352,327,358],['g',344,356,338,362],['g',346,358,340,362],['r',352,352,342,360],['r',342,352,338,356],
        ['g',342,350,338,354],['r',346,346,340,352],['g',350,364,346,368],['g',352,366,348,372],['g',366,376,362,380]
      ] },
      { base: 280, k: 3, rows: [
        ['r',265,290,262,293],['r',268,268,262,287],['r',248,268,240,278],['r',218,247,212,250],['r',208,218,188,225],
        ['g',222,232,214,250],['g',232,232,216,248],['g',236,254,225,260],['g',248,270,236,273],['g',273,310,258,332],
        ['r',305,314,302,325],['g',302,302,288,308],['g',315,358,315,372],['r',334,362,332,365],['g',336,362,336,362],
        ['g',364,364,364,385],['r',315,372,308,378],['r',323,323,320,335],['r',314,332,275,340],['r',251,310,250,315],
        ['g',238,263,220,270],['r',226,274,210,285],['g',233,233,220,240],['r',236,236,210,248],['g',232,272,230,272],
        ['r',240,272,236,275],['r',190,235,183,245],['r',183,183,153,187],['r',173,186,168,192],['r',163,175,140,180],
        ['r',94,152,90,155],['r',100,100,78,108],['g',102,142,82,150],['g',148,170,130,175],['r',158,172,145,178],
        ['r',112,142,96,148],['r',64,112,56,125],['g',57,57,25,68],['r',31,65,25,78],['g',36,102,36,102]
      ] }
    ];
    const candles = candleBlocks.flatMap(b => b.rows.map(r => [r[0], ...r.slice(1).map(v => Math.round(b.base + v / b.k))]));

    const ma60 = [[26,232],[80,242],[100,245],[130,247],[200,246],[260,244],[300,240],[350,235],[385,232],[420,227],[450,228],[480,232],[520,237],[560,244],[600,251],[650,265],[700,285],[740,300],[780,313],[850,343],[900,353],[920,354],[950,358],[1000,361],[1030,360],[1055,355]];
    const ma30 = [[26,238],[70,239],[110,245],[140,252],[200,252],[250,249],[300,240],[320,230],[345,220],[370,213],[400,210],[430,205],[445,204],[470,208],[490,222],[520,237],[545,257],[570,272],[600,292],[640,315],[680,330],[720,340],[760,350],[780,353],[850,359],[900,367],[950,371],[1000,363],[1020,362],[1055,351]];
    const ma20 = [[26,227],[50,238],[80,250],[100,265],[130,265],[150,260],[180,248],[210,242],[240,237],[280,239],[300,240],[333,225],[345,220],[380,203],[405,187],[425,182],[445,185],[465,205],[490,232],[510,263],[540,290],[565,310],[600,318],[650,342],[700,348],[750,350],[780,357],[830,357],[850,363],[880,370],[920,377],[950,375],[970,375],[1000,360],[1025,348],[1055,333]];
    const ma10 = [[26,253],[50,262],[70,273],[100,276],[120,270],[140,253],[160,233],[185,227],[205,227],[225,233],[250,248],[280,255],[300,250],[310,233],[330,200],[355,177],[375,158],[395,165],[415,183],[435,207],[450,222],[470,253],[490,290],[500,313],[520,330],[540,332],[560,320],[590,303],[600,307],[620,335],[640,365],[650,372],[670,362],[700,345],[740,348],[780,356],[810,360],[835,362],[860,370],[890,385],[910,389],[930,384],[960,368],[1000,342],[1030,328],[1055,314]];
    const ma5 = [[26,268],[50,265],[65,275],[85,286],[100,278],[115,255],[135,242],[165,219],[185,222],[205,233],[230,253],[260,255],[275,252],[300,233],[310,230],[325,197],[340,152],[348,140],[365,148],[375,167],[390,178],[405,193],[430,203],[445,233],[460,277],[480,317],[505,348],[520,345],[550,305],[565,302],[590,302],[605,320],[620,365],[640,378],[660,365],[680,355],[700,348],[720,345],[750,350],[770,368],[780,362],[800,368],[815,358],[840,358],[860,375],[880,390],[895,396],[910,392],[930,372],[950,360],[985,340],[1000,325],[1030,325],[1045,308],[1055,306]];

    // bar heights in px
    const volBars = [21,19,17,23,20,17,15,19,17,16,16,32,29,27,24,24,32,36,30,26,25,22,19,21,20,27,21,28,23,22,22,22,20,22,22,29,
      40,28,26,28,32,42,51,52,54,47,40,41,45,53,45,34,32,30,29,31,30,33,36,24,24,24,18,20,20,19,16,15,19,17,18,18,25,27,26,24,19,
      24,22,24,26,24,30,33,25,22,24,20,22,24,26,18,22,18,24,20,24,26,22,18,18,24,20,18,20,22,22,18,
      11,13,18,21,23,18,17,17,19,16,13,14,22,20,17,17,20,15,22,27,23,28,21,19,17,19,27,26,20,22,27,24,23,18,20,21,30,29,29,30];

    const macdBars = [-17,-13,-12,-11,-10,-9,-8,-7,-7,-6,-5,0,6,10,17,17,14,18,20,20,19,19,18,14,13,8,3,-7,-7,-7,-8,-9,-10,-8,-7,5,7,8,7,6,13,20,30,32,37,30,28,20,19,13,1,
      -7,-10,-11,-12,-13,-15,-17,-30,-30,-35,-42,-42,-42,-43,-45,-43,-42,-33,-25,-16,-5,1,9,14,17,17,
      18,19,20,20,20,19,18,16,14,10,7,4,2,1,-2,-3,-5,-6,-6,-5,-5,-4,-3,-2,-2,-1,-1,1,2,2,3,
      3,2,3,5,7,7,7,5,3,0,-3,-3,-7,-7,-7,-7,-3,-1,1,7,9,13,15,15,13,13,14,16,16,17,18,21,17,13,12,11,13,14,14,10];

    const zx = z => z / 2.8, zy = z => 425 + z / 3, ry = z => 280 + z / 3, rx = z => 780 + z / 3;
    const mavol5 = [[72,165],[180,175],[270,178],[300,165],[340,150],[460,140],[540,162],[620,158],[700,163],[760,150],[860,140],[920,105],[960,78],[1010,90],[1080,97],[1150,135],[1210,135],[1300,163],[1380,178],[1470,172],[1560,155]].map(p => [zx(p[0]), zy(p[1])])
      .concat([[600,476],[640,480],[700,478],[750,482]], [[0,620],[100,607],[180,608],[220,615],[300,612],[400,600],[470,592],[530,600],[640,590],[700,600],[800,583],[820,582]].map(p => [rx(p[0]), ry(p[1])]));
    const mavol10 = [[72,170],[270,175],[340,158],[470,145],[540,150],[620,160],[800,155],[900,130],[960,110],[1050,88],[1150,115],[1220,125],[1300,145],[1420,175],[1560,165]].map(p => [zx(p[0]), zy(p[1])])
      .concat([[600,478],[640,480],[700,480],[750,483]], [[0,617],[120,612],[300,608],[400,600],[550,597],[800,595],[826,583]].map(p => [rx(p[0]), ry(p[1])]));
    const diff = [[72,490],[110,495],[180,508],[270,513],[300,490],[350,467],[420,435],[460,425],[540,425],[620,445],[700,465],[740,475],[790,450],[850,445],[900,400],[960,352],[1000,355],[1030,355],[1080,390],[1190,425],[1230,470],[1290,545],[1350,595],[1390,622],[1420,622],[1470,595],[1520,555],[1560,547]].map(p => [zx(p[0]), zy(p[1])])
      .concat([[600,603],[640,612],[700,600],[750,597]], [[0,930],[60,928],[100,915],[180,915],[250,932],[320,945],[390,938],[460,905],[560,890],[660,843],[700,843],[720,850],[800,827],[826,830]].map(p => [rx(p[0]), ry(p[1])]));
    const dea = [[72,467],[180,490],[270,505],[360,485],[440,460],[520,437],[560,432],[620,445],[700,457],[780,465],[860,450],[960,395],[1020,378],[1060,376],[1190,407],[1290,475],[1380,555],[1430,585],[1480,590],[1560,567]].map(p => [zx(p[0]), zy(p[1])])
      .concat([[600,612],[640,612],[700,603],[750,598]], [[0,930],[60,928],[100,922],[180,918],[250,928],[340,938],[390,936],[460,925],[600,895],[660,870],[800,843],[826,840]].map(p => [rx(p[0]), ry(p[1])]));

    const line = (pts, color) => `<polyline points="${pts.map(p => p.join(',')).join(' ')}" fill="none" stroke="${color}" stroke-width="1"/>`;
    const dotted = y => `<path d="M23 ${y + 0.5} H1073" stroke="#555" stroke-dasharray="1 3" shape-rendering="crispEdges"/>`;
    const axisLine = (y1, y2) => `<path d="M1073.5 ${y1} V${y2}" stroke="#000" shape-rendering="crispEdges"/>`;
    const label = (y, text, color) => `<text x="1076" y="${y + 5}" font-size="12" fill="${color || '#c0242c'}">${text}</text>`;

    // price panel
    let s = '';
    s += '<rect x="375" y="169" width="698" height="4" fill="#bdbdbd"/><rect x="432" y="207" width="641" height="10" fill="#bdbdbd"/>';
    [88, 172, 257, 341].forEach(y => s += dotted(y));
    s += '<text x="379" y="164" font-size="11.5" fill="#bbb">1799.982-1791.701</text><text x="436" y="202" font-size="11.5" fill="#bbb">1727.271-1707.858</text>';
    s += '<g shape-rendering="crispEdges">';
    candles.forEach((c, i) => {
      const [t, top, bot, hi, lo] = c, x = barX(i), col = t === 'r' ? RED : GREEN;
      s += `<path d="M${x + 0.5} ${hi} V${lo}" stroke="${col}"/>`;
      if (top === bot) s += `<rect x="${x - 2}" y="${top}" width="5" height="1" fill="${col}"/>`;
      else if (t === 'r') s += `<rect x="${x - 1.5}" y="${top + 0.5}" width="4" height="${bot - top}" fill="#fff" stroke="${col}"/>`;
      else s += `<rect x="${x - 2}" y="${top}" width="5" height="${bot - top}" fill="${col}"/>`;
    });
    s += '</g>';
    s += line(ma60, TEAL) + line(ma30, DKGREEN) + line(ma20, PINK) + line(ma10, PURPLE) + line(ma5, TEAL);
    s += '<path d="M336 104.5 H346 M336 104.5 L340 102 M336 104.5 L340 107" stroke="#000" fill="none"/><text x="349" y="108" font-size="12">1924.465</text>';
    s += '<path d="M888 408.5 H900 M888 408.5 L892 406 M888 408.5 L892 411" stroke="#000" fill="none"/><text x="902" y="412" font-size="12">1340.379</text>';
    s += axisLine(67, 426) + label(88, '1957') + '<path d="M1073 159.5 H1126 M1073 176.5 H1126" stroke="#888" shape-rendering="crispEdges"/>' + label(168, '1803') + label(257, '1632') + label(341, '1471');
    document.getElementById('priceChart').innerHTML = s;

    // volume panel
    s = '';
    [447, 475].forEach(y => s += dotted(y));
    s += '<g shape-rendering="crispEdges">';
    volBars.forEach((h, i) => {
      const x = barX(i), up = candles[i][0] === 'r';
      if (up) s += `<rect x="${x - 1.5}" y="${501.5 - h}" width="4" height="${h}" fill="#fff" stroke="${RED}"/>`;
      else s += `<rect x="${x - 2}" y="${502 - h}" width="5" height="${h}" fill="${GREEN}"/>`;
    });
    s += '</g>' + line(mavol5, '#8b1010') + line(mavol10, TEAL);
    s += axisLine(427, 502) + label(447, '2831') + label(475, '1415');
    s += '<rect x="1074.5" y="487.5" width="13" height="14" fill="#fff" stroke="#888"/><text x="1075" y="499" font-size="12" fill="#c0242c">万</text>';
    document.getElementById('volChart').innerHTML = s;

    // macd panel
    s = '';
    [542, 579, 624].forEach(y => s += dotted(y));
    s += '<g shape-rendering="crispEdges">';
    macdBars.forEach((v, i) => {
      if (v) s += `<path d="M${barX(i) + 0.5} 579 V${579 - v}" stroke="${v > 0 ? RED : GREEN}"/>`;
    });
    s += '</g>' + line(dea, PURPLE) + line(diff, TEAL);
    s += axisLine(521, 635) + '<path d="M22 633.5 H1073" stroke="#000" shape-rendering="crispEdges"/>';
    s += label(542, '+51.54') + label(579, '+0') + label(624, '-63.59', '#1a8f1a');
    document.getElementById('macdChart').innerHTML = s;

    // x axis
    s = '';
    [[24, '11'], [161, '12'], [321, '01'], [462, '02'], [566, '03'], [727, '04'], [868, '05'], [1000, '06']].forEach(m => {
      s += `<path d="M${m[0] - 1.5} 635 V640" stroke="#333" shape-rendering="crispEdges"/><text x="${m[0]}" y="647" font-size="12">${m[1]}</text>`;
    });
    document.getElementById('axisChart').innerHTML = s;

    // pie
    const slices = [[0, 12, '#c80000'], [12, 38, '#800000'], [38, 105, '#400000'], [105, 180, '#000'], [180, 231, '#000'], [231, 296, '#004000'], [296, 333, '#008000'], [333, 360, '#00c000']];
    const polar = a => { const r = a * Math.PI / 180; return [(49 * Math.sin(r)).toFixed(2), (-49 * Math.cos(r)).toFixed(2)]; };
    s = '';
    slices.forEach(sl => {
      const a = polar(sl[0]), b = polar(sl[1]);
      s += `<path d="M0 0 L${a} A49 49 0 ${sl[1] - sl[0] > 180 ? 1 : 0} 1 ${b} Z" fill="${sl[2]}" stroke="#40e8f0"/>`;
    });
    [[8, '8%', 14, -31], [19, '19%', 33, -10], [18, '18%', -36, 3], [10, '10%', -25, -25], [7, '7%', -8, -33]].forEach(t => {
      s += `<text x="${t[2]}" y="${t[3]}" text-anchor="middle" dominant-baseline="central" font-size="11" fill="#000">${t[1]}</text>`;
    });
    document.getElementById('pieChart').innerHTML = s;
  </script>
</body>
</html>
